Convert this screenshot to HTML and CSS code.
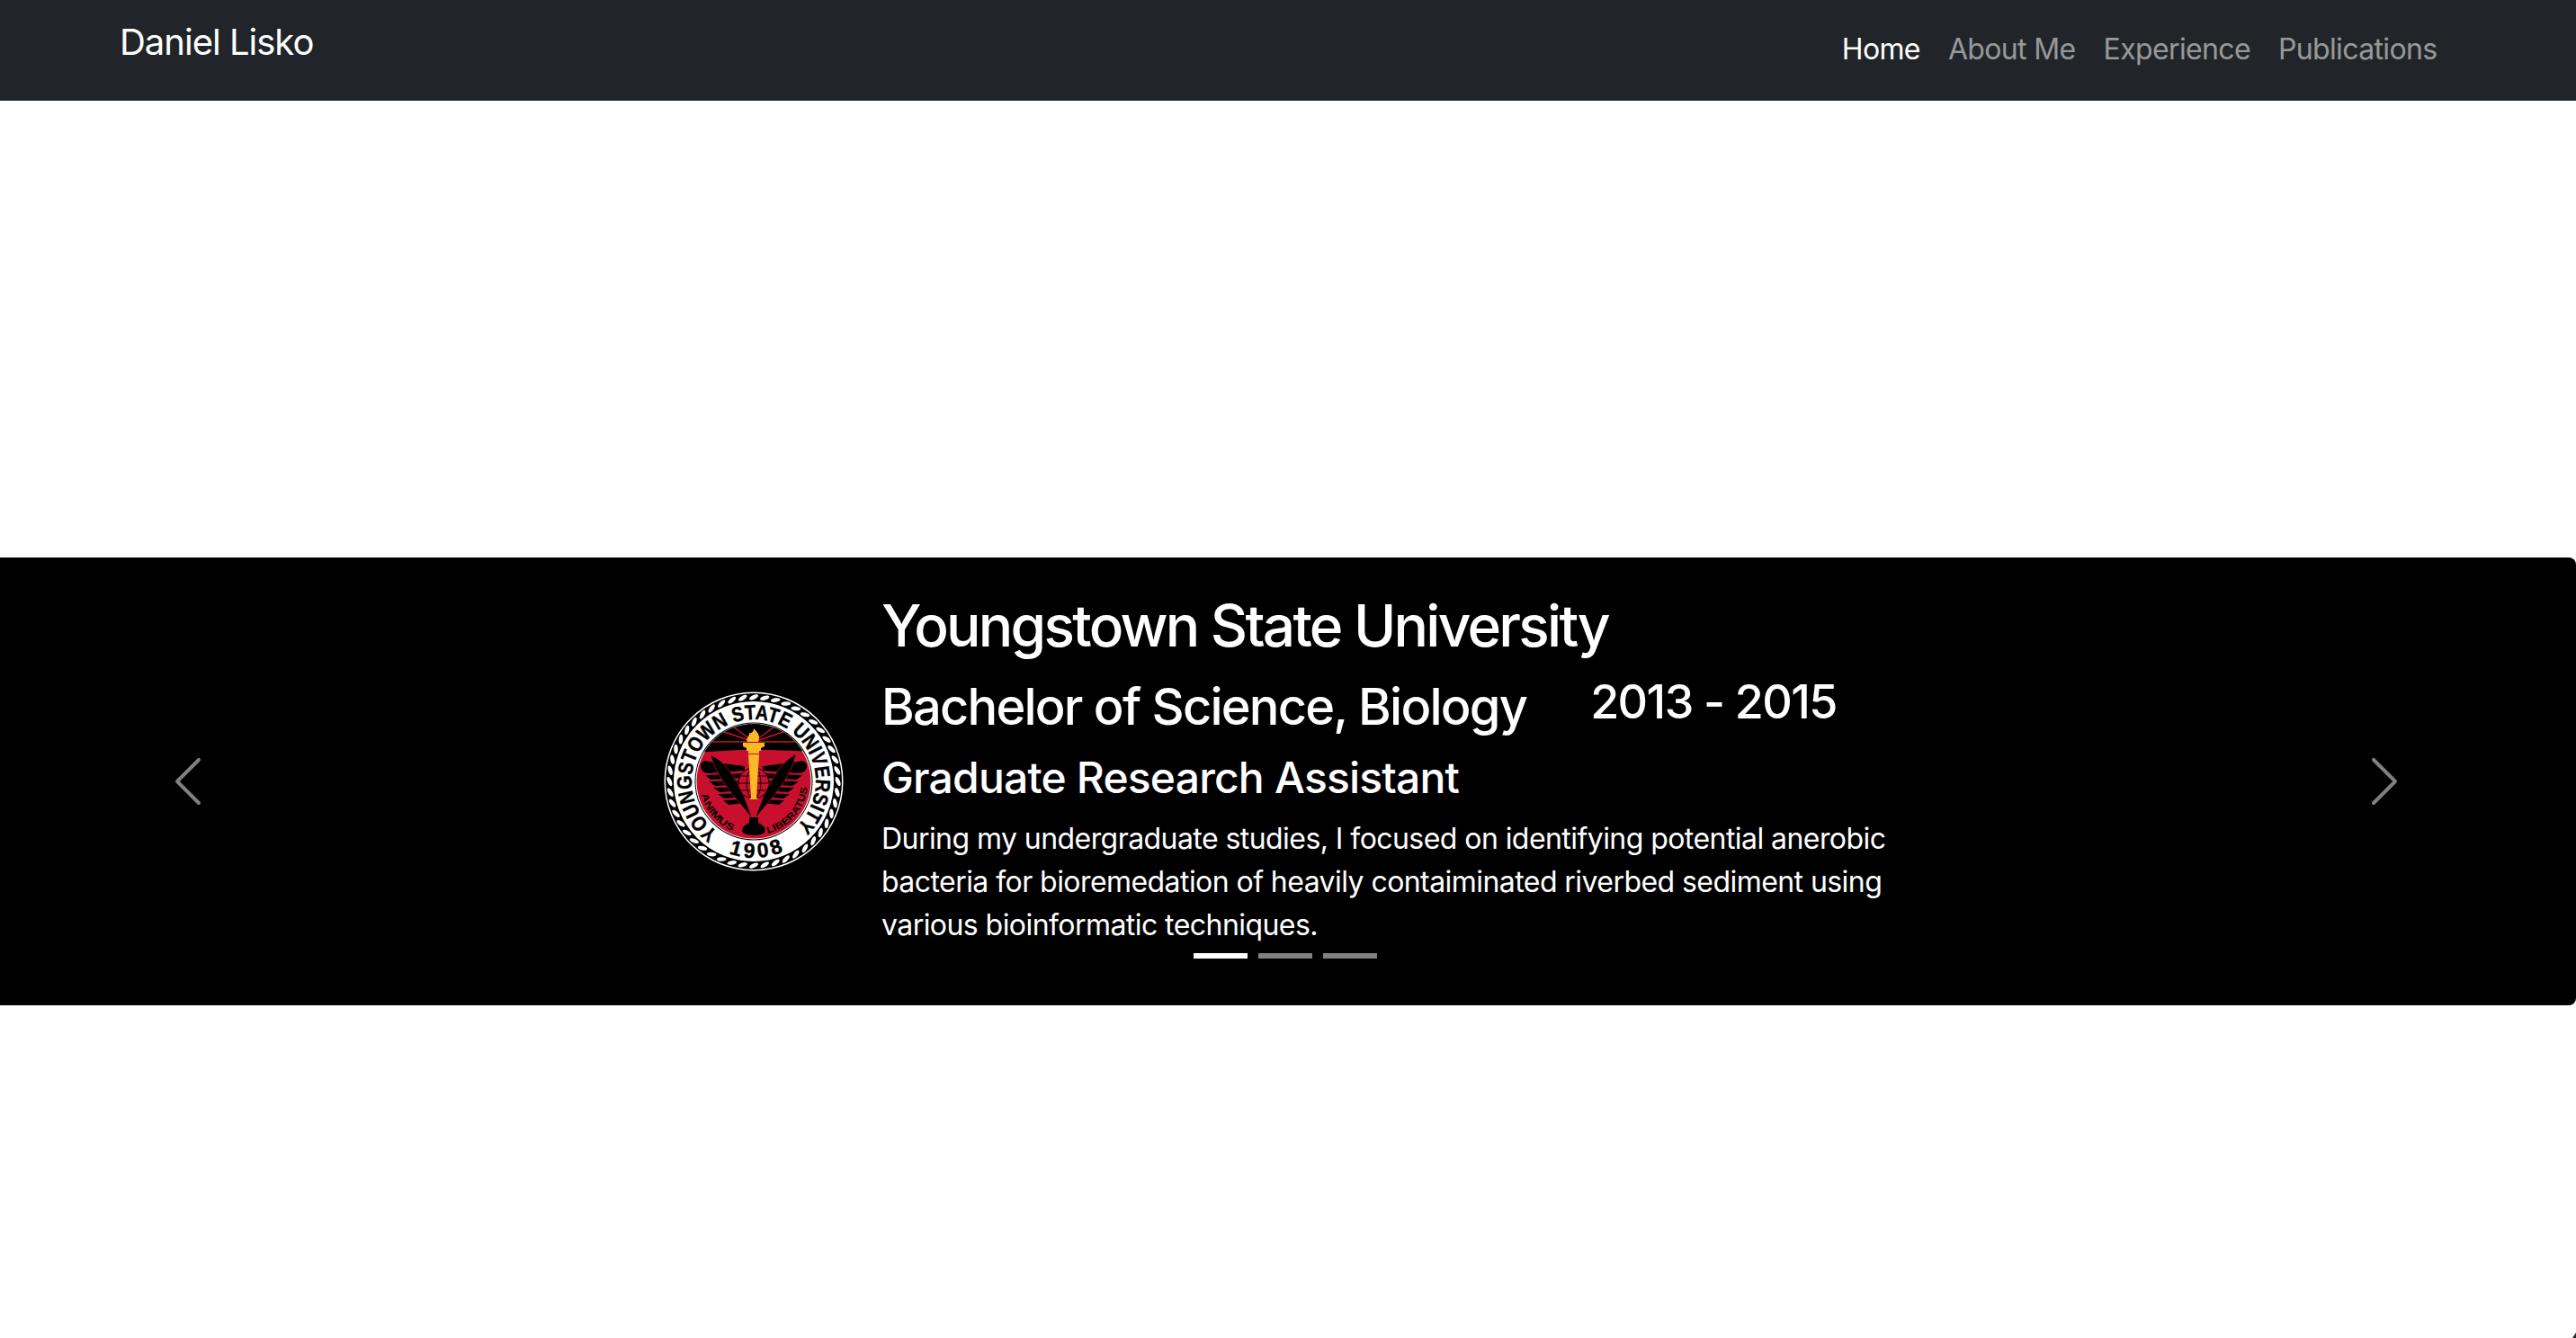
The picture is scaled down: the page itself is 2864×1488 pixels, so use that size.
FILE: index.html
```html
<!DOCTYPE html>
<html lang="en">

<head>
    <meta charset="UTF-8">
    <meta name="viewport" content="width=device-width, initial-scale=1.0">
    <title>Daniel Lisko</title>
    <link rel="stylesheet" href="styles.css">
</head>

<body>
    <nav class="navbar">
        <a class="brand" href="#">Daniel Lisko</a>
        <ul class="nav-links">
            <li><a class="nav-link active" href="#">Home</a></li>
            <li><a class="nav-link" href="#">About Me</a></li>
            <li><a class="nav-link" href="#">Experience</a></li>
            <li><a class="nav-link" href="#">Publications</a></li>
        </ul>
    </nav>

    <section class="carousel">
        <a class="control control-prev" href="#">
            <svg viewBox="0 0 16 16" width="64" height="64"><path fill="#fff" d="M11.354 1.646a.5.5 0 0 1 0 .708L5.707 8l5.647 5.646a.5.5 0 0 1-.708.708l-6-6a.5.5 0 0 1 0-.708l6-6a.5.5 0 0 1 .708 0z"/></svg>
        </a>

        <div class="slide">
            <svg class="seal" viewBox="0 0 200 200" width="200" height="200">
                <defs>
                    <path id="arc-name" d="M60.4 156.5A69 69 0 1 1 143.4 153.6"/>
                    <path id="arc-year" d="M72.3 180.4A85 85 0 0 0 135.9 177"/>
                    <path id="arc-animus" d="M41.8 114.5A60 60 0 0 0 76.6 155.2"/>
                    <path id="arc-liberatus" d="M115.5 158A60 60 0 0 0 159.7 106.3"/>
                    <clipPath id="disc"><circle cx="100" cy="100" r="64"/></clipPath>
                    <ellipse id="strand" cx="100" cy="6.4" rx="5.4" ry="2.3" fill="#fff" transform="rotate(-24 100 6.4)"/>
                    <g id="strands">
                        <use href="#strand"/>
                        <use href="#strand" transform="rotate(7.5 100 100)"/>
                        <use href="#strand" transform="rotate(15 100 100)"/>
                        <use href="#strand" transform="rotate(22.5 100 100)"/>
                        <use href="#strand" transform="rotate(30 100 100)"/>
                        <use href="#strand" transform="rotate(37.5 100 100)"/>
                        <use href="#strand" transform="rotate(45 100 100)"/>
                        <use href="#strand" transform="rotate(52.5 100 100)"/>
                        <use href="#strand" transform="rotate(60 100 100)"/>
                        <use href="#strand" transform="rotate(67.5 100 100)"/>
                        <use href="#strand" transform="rotate(75 100 100)"/>
                        <use href="#strand" transform="rotate(82.5 100 100)"/>
                    </g>
                </defs>
                <!-- rope border -->
                <circle cx="100" cy="100" r="99.5" fill="#fff"/>
                <circle cx="100" cy="100" r="93.5" fill="none" stroke="#000" stroke-width="9"/>
                <use href="#strands"/>
                <use href="#strands" transform="rotate(90 100 100)"/>
                <use href="#strands" transform="rotate(180 100 100)"/>
                <use href="#strands" transform="rotate(270 100 100)"/>
                <text class="seal-name"><textPath href="#arc-name" textLength="338" lengthAdjust="spacingAndGlyphs">YOUNGSTOWN STATE UNIVERSITY</textPath></text>
                <text class="seal-name"><textPath href="#arc-year" textLength="62">1908</textPath></text>

                <!-- red disc -->
                <circle cx="100" cy="100" r="65.5" fill="#000"/>
                <circle cx="100" cy="100" r="64.5" fill="#fff"/>
                <circle cx="100" cy="100" r="63.5" fill="#c8102e"/>
                <g clip-path="url(#disc)">
                    <path fill="#000" d="M30 30H170V67L116 65H84L30 68Z"/>
                    <path fill="none" stroke="#c8102e" stroke-width="1.4" d="M30 56H170M100 56L70 34M100 56L52 40M100 56L130 34M100 56L148 40"/>
                </g>

                <!-- wings -->
                <g fill="#000">
                    <path d="M41 83C41 78 46 76 50 78L90 83V88L50 91C45 91 41 88 41 83Z"/>
                    <path d="M46 93L90 91V96L52 98Z"/>
                    <path d="M50 100L90 99V103L57 105Z"/>
                    <path d="M55 107L90 106V110L62 112Z"/>
                    <path d="M60 114L90 113V117L67 119Z"/>
                    <path d="M66 121L90 120V124L72 126Z"/>
                    <path d="M159 83C159 78 154 76 150 78L110 83V88L150 91C155 91 159 88 159 83Z"/>
                    <path d="M154 93L110 91V96L148 98Z"/>
                    <path d="M150 100L110 99V103L143 105Z"/>
                    <path d="M145 107L110 106V110L138 112Z"/>
                    <path d="M140 114L110 113V117L133 119Z"/>
                    <path d="M134 121L110 120V124L128 126Z"/>
                </g>

                <!-- globe -->
                <g fill="#c8102e" stroke="#000" stroke-width=".9">
                    <circle cx="100" cy="102" r="17"/>
                    <ellipse cx="100" cy="102" rx="8" ry="17"/>
                    <path fill="none" d="M83 102H117M85 94H115M85 110H115"/>
                </g>

                <!-- quills -->
                <g fill="#000" stroke="#c8102e" stroke-width=".7">
                    <path d="M52 71C68 76 86 102 98 141C84 122 60 100 52 71Z"/>
                    <path d="M147 70C132 76 114 102 102 141C116 122 140 100 147 70Z"/>
                </g>

                <!-- torch -->
                <g fill="#fdb827">
                    <path d="M100 41C104 46 108 48 105 56H93C90 52 96 50 95 46C97 47 100 45 100 41Z"/>
                    <path d="M88 57H112V61L108 63V66H106V69H94V66H92V63L88 61Z"/>
                    <path d="M94 70H106L103 118L105 120H95L97 118Z"/>
                </g>

                <!-- inkwell -->
                <path fill="#000" d="M95 140H105V146C112 149 114 153 112 157C108 161 92 161 88 157C86 153 88 149 95 146Z"/>

                <text class="seal-motto"><textPath href="#arc-animus" textLength="55" lengthAdjust="spacingAndGlyphs">ANIMUS</textPath></text>
                <text class="seal-motto"><textPath href="#arc-liberatus" textLength="72" lengthAdjust="spacingAndGlyphs">LIBERATUS</textPath></text>
            </svg>

            <div class="slide-text">
                <h2 class="school">Youngstown State University</h2>
                <div class="degree-row">
                    <h3 class="degree">Bachelor of Science, Biology</h3>
                    <h4 class="years">2013 - 2015</h4>
                </div>
                <h4 class="role">Graduate Research Assistant</h4>
                <p class="summary">During my undergraduate studies, I focused on identifying potential anerobic bacteria for bioremedation of heavily contaiminated riverbed sediment using various bioinformatic techniques.</p>
            </div>
        </div>

        <a class="control control-next" href="#">
            <svg viewBox="0 0 16 16" width="64" height="64"><path fill="#fff" d="M4.646 1.646a.5.5 0 0 1 .708 0l6 6a.5.5 0 0 1 0 .708l-6 6a.5.5 0 0 1-.708-.708L10.293 8 4.646 2.354a.5.5 0 0 1 0-.708z"/></svg>
        </a>

        <div class="indicators">
            <span class="indicator active"></span>
            <span class="indicator"></span>
            <span class="indicator"></span>
        </div>
    </section>

    <div class="window-corner"></div>
</body>

</html>
```

FILE: styles.css
```css
* {
    box-sizing: border-box;
}

html,
body {
    margin: 0;
    padding: 0;
}

body {
    height: 1488px;
    overflow: hidden;
    background: #fff;
    color: #fff;
    font-family: Inter, "Liberation Sans", sans-serif;
    font-size: 32px;
    line-height: 1.5;
    letter-spacing: -0.0175em;
}

a {
    color: inherit;
    text-decoration: none;
}

.navbar {
    display: flex;
    justify-content: space-between;
    align-items: flex-start;
    height: 112px;
    padding: 15px 139px 0 133px;
    background: #212529;
}

.brand {
    margin-top: 2px;
    font-size: 40px;
    letter-spacing: -0.025em;
}

.nav-links {
    display: flex;
    margin: 0;
    padding: 0;
    list-style: none;
}

.nav-link {
    display: block;
    padding: 16px 15.5px;
    color: rgba(255, 255, 255, 0.55);
    letter-spacing: -0.02em;
}

.nav-link.active {
    color: #fff;
}

.carousel {
    position: relative;
    display: flex;
    align-items: center;
    justify-content: center;
    height: 498px;
    margin-top: 508px;
    background: #000;
    border-radius: 0 8px 8px 0;
}

.slide {
    display: flex;
    align-items: center;
    gap: 42px;
    width: 1388px;
}

.seal {
    flex: none;
}

.seal-name {
    fill: #000;
    stroke: #000;
    stroke-width: 0.4px;
    font-family: "Liberation Sans", sans-serif;
    font-size: 23px;
    font-weight: 700;
    letter-spacing: 0;
}

.seal-motto {
    fill: #000;
    font-family: "Liberation Sans", sans-serif;
    font-size: 10.5px;
    font-weight: 700;
    letter-spacing: 0;
}

.slide-text {
    width: 1144px;
    padding-bottom: 27px;
}

.school,
.degree,
.years,
.role {
    margin: 0 0 16px;
    font-weight: 500;
    line-height: 1.2;
}

.school {
    margin-bottom: 18px;
    font-size: 64px;
    letter-spacing: -0.043em;
}

.degree-row {
    display: flex;
    gap: 71px;
}

.degree {
    font-size: 56px;
    letter-spacing: -0.032em;
}

.years {
    margin-top: -3px;
    font-size: 52px;
    letter-spacing: -0.03em;
}

.role {
    font-size: 48px;
    letter-spacing: -0.017em;
}

.summary {
    margin: 0;
}

.control {
    position: absolute;
    top: 0;
    bottom: 0;
    display: flex;
    align-items: center;
    justify-content: center;
    width: 418px;
    opacity: 0.5;
}

.control-prev {
    left: 0;
}

.control-next {
    right: 0;
    width: 426px;
}

.indicators {
    position: absolute;
    left: 0;
    right: 6px;
    bottom: 52px;
    display: flex;
    justify-content: center;
    gap: 12px;
}

.indicator {
    width: 60px;
    height: 6px;
    background: #fff;
    opacity: 0.5;
}

.indicator.active {
    opacity: 1;
}

.window-corner {
    position: fixed;
    right: 0;
    bottom: 0;
    width: 4px;
    height: 6px;
    background: #2a2530;
    clip-path: polygon(100% 0, 100% 100%, 0 100%);
}
```
